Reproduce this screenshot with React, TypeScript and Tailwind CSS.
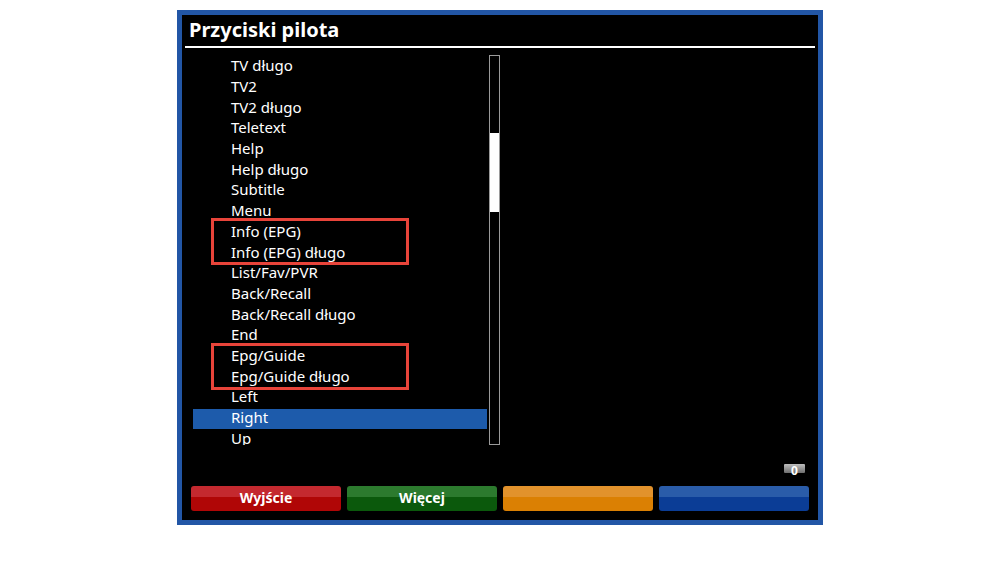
import React from "react";

const items = [
  "TV długo",
  "TV2",
  "TV2 długo",
  "Teletext",
  "Help",
  "Help długo",
  "Subtitle",
  "Menu",
  "Info (EPG)",
  "Info (EPG) długo",
  "List/Fav/PVR",
  "Back/Recall",
  "Back/Recall długo",
  "End",
  "Epg/Guide",
  "Epg/Guide długo",
  "Left",
  "Right",
  "Up",
];

const buttons = [
  { label: "Wyjście", cls: "bg-[linear-gradient(#c4292f_0%,#c4292f_45%,#b00606_45%,#b00606_100%)]" },
  { label: "Więcej", cls: "bg-[linear-gradient(#2c7a2e_0%,#2c7a2e_45%,#0b590c_45%,#0b590c_100%)]" },
  { label: "", cls: "bg-[linear-gradient(#e2922c_0%,#e2922c_45%,#db8003_45%,#db8003_100%)]" },
  { label: "", cls: "bg-[linear-gradient(#2a5ca9_0%,#2a5ca9_45%,#0b3d96_45%,#0b3d96_100%)]" },
];

export default function App() {
  return (
    <div
      className="w-[1000px] h-[562px] bg-white overflow-hidden pt-[10px] pl-[177px]"
      style={{ fontFamily: '"Noto Sans", "Open Sans", sans-serif' }}
    >
      <div className="relative w-[646px] h-[515px] border-[5px] border-[#2256a6] bg-black flex flex-col">
        {/* Header */}
        <div className="h-[31px] pl-[7px] pb-[3px] flex items-end">
          <span className="text-white font-bold text-[20px] leading-[26px]">Przyciski pilota</span>
        </div>
        <div className="mx-[3px] h-[2px] bg-white" />

        {/* Body */}
        <div className="flex mt-[7px] pl-[11px] h-[391px]">
          <div className="w-[294px] h-[390px] pt-[2px] overflow-hidden">
            {items.map((t) => (
              <div
                key={t}
                className={`h-[20.7px] flex items-center pl-[38px] text-white text-[15px] leading-none pb-[3px] ${
                  t === "Right" ? "bg-[#1d5bab]" : ""
                }`}
              >
                {t}
              </div>
            ))}
          </div>
          <div className="ml-[2px] w-[11px] h-[390px] border border-[#9a9a9a] flex flex-col">
            <div className="h-[77px]" />
            <div className="h-[79px] bg-white" />
          </div>
        </div>

        {/* Badge */}
        <div className="flex justify-end pr-[13px] mt-[18px]">
          <div className="w-[21px] h-[9px] rounded-[1px] bg-[linear-gradient(#bdbdbd,#6e6e6e)] flex justify-center">
            <span className="text-white font-bold text-[12px] leading-[12px] mt-[1px]">0</span>
          </div>
        </div>

        {/* Buttons */}
        <div className="flex gap-[6px] pl-[9px] mt-[13px]">
          {buttons.map((b, i) => (
            <div
              key={i}
              className={`w-[150px] h-[25px] rounded-[3px] flex items-center justify-center pb-[2px] text-white font-bold text-[14px] ${b.cls}`}
            >
              {b.label}
            </div>
          ))}
        </div>

        {/* Annotation boxes */}
        <div className="absolute left-[29px] top-[203px] w-[198px] h-[47px] border-[3px] border-[#e8443a]" />
        <div className="absolute left-[29px] top-[328px] w-[198px] h-[47px] border-[3px] border-[#e8443a]" />
      </div>
    </div>
  );
}
